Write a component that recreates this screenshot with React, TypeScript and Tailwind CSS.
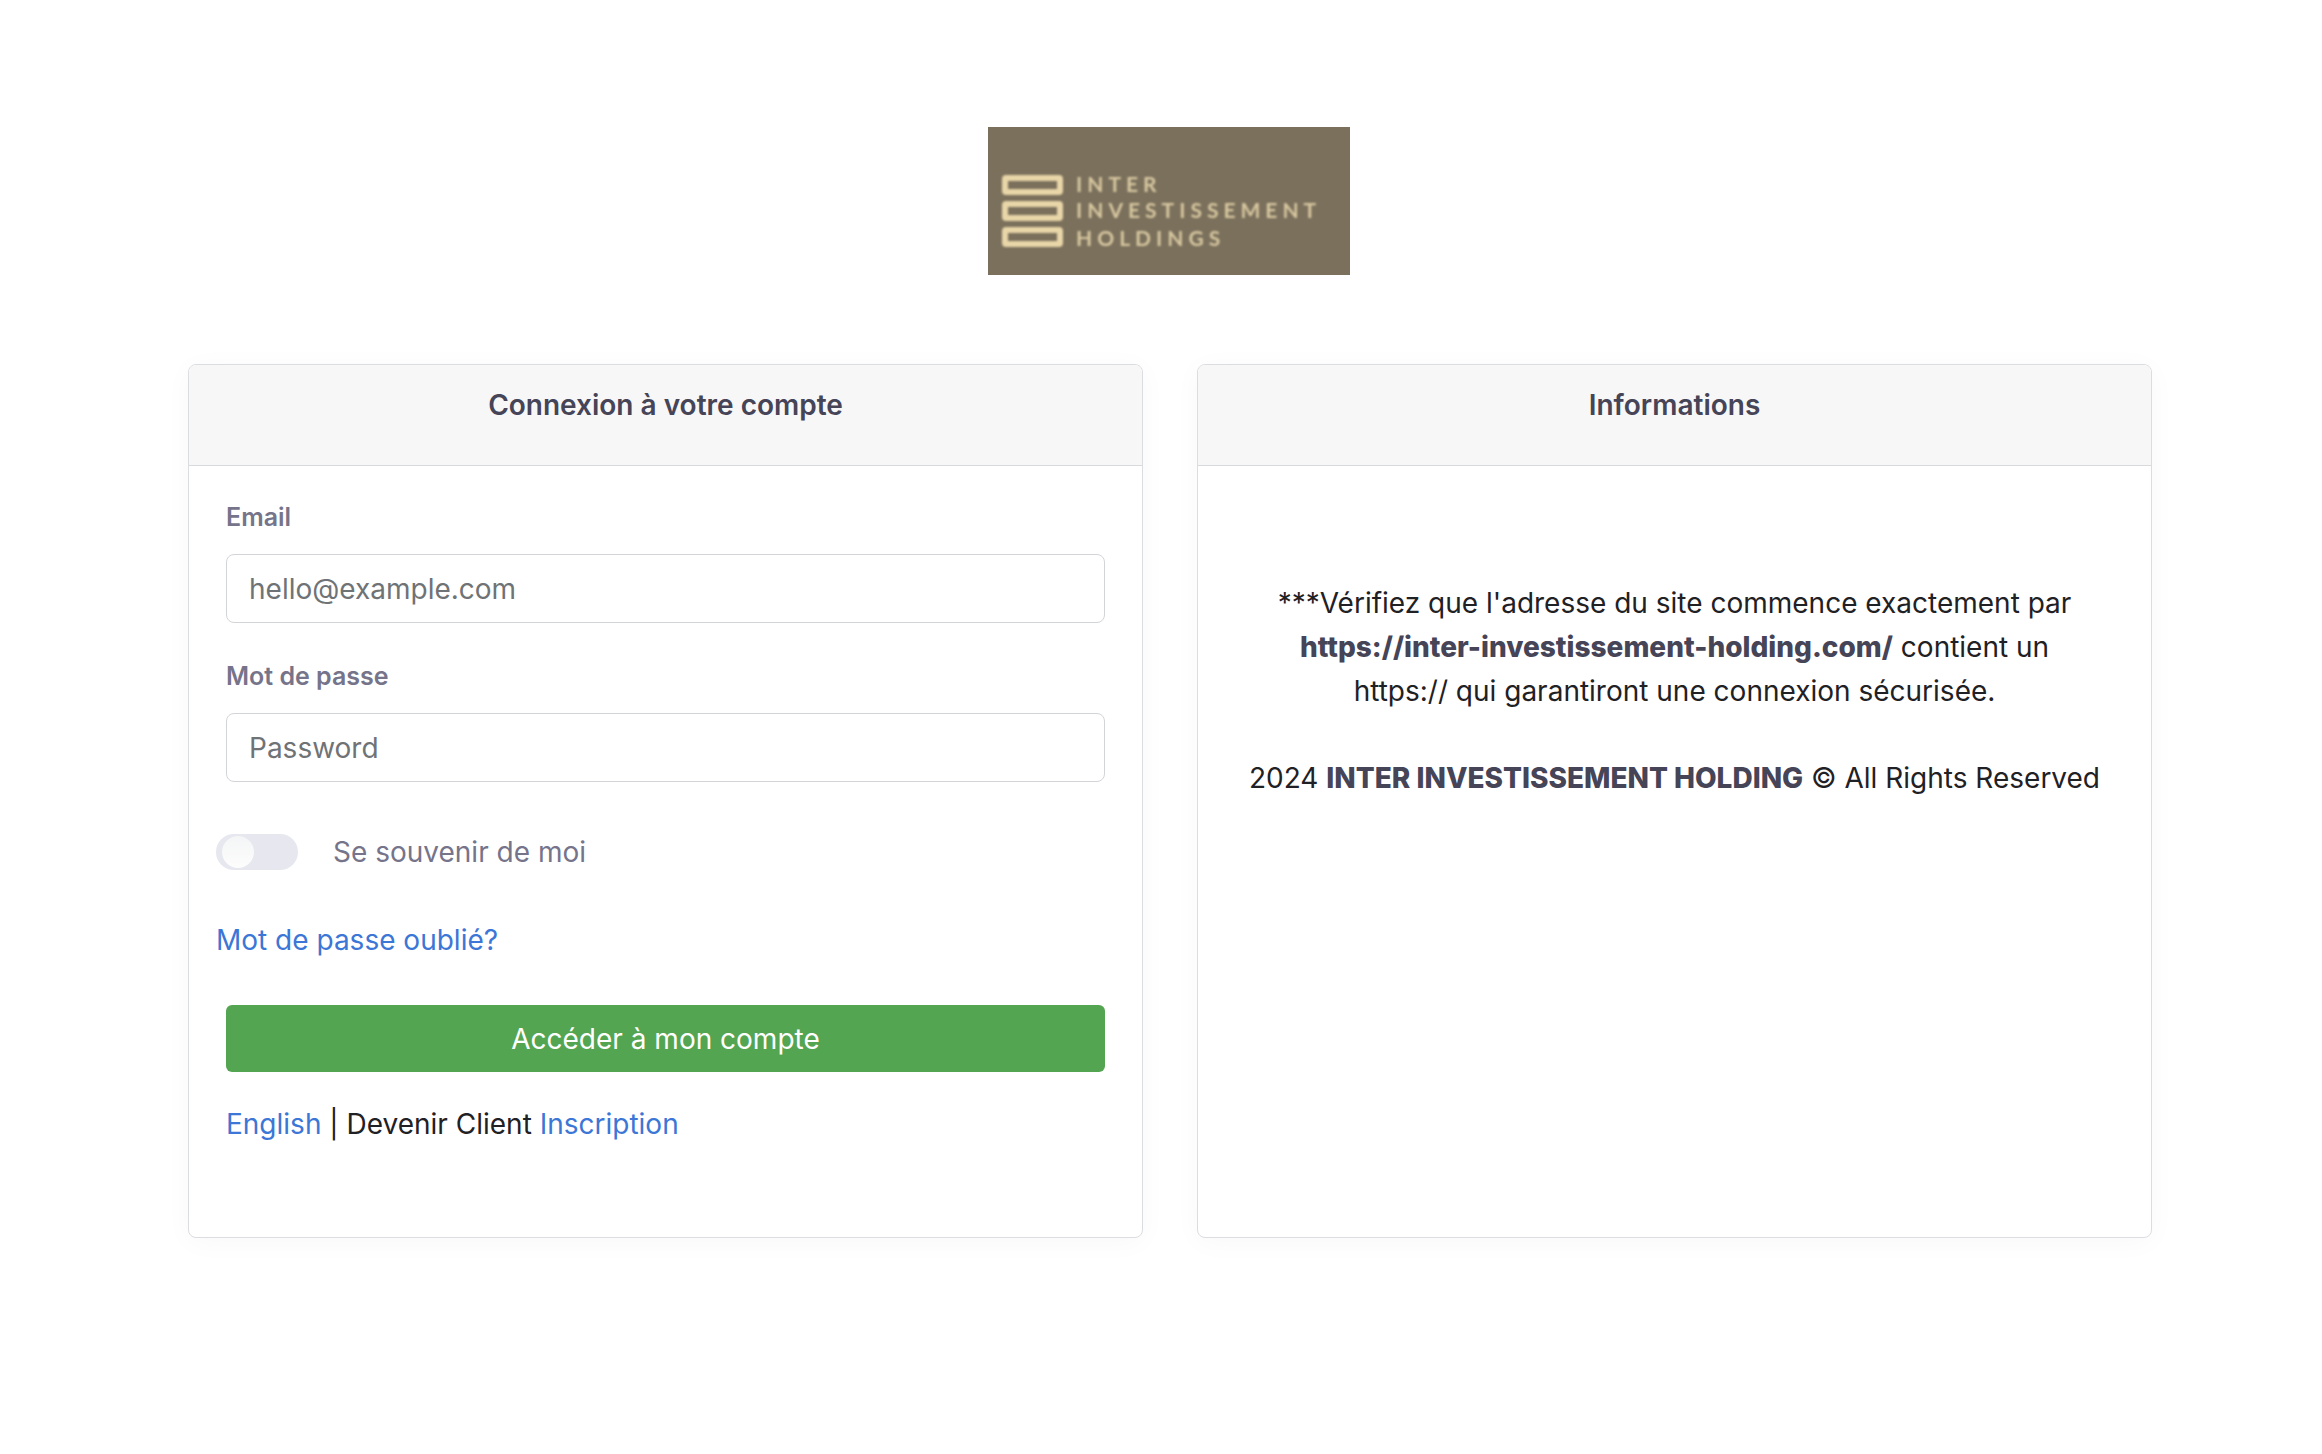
import type { ReactNode } from "react";

function Logo() {
  return (
    <svg
      className="h-[148px] w-[362px]"
      viewBox="0 0 362 148"
      role="img"
      aria-label="Inter Investissement Holdings"
    >
      <defs>
        <filter id="soften" x="-5%" y="-5%" width="110%" height="110%">
          <feGaussianBlur stdDeviation="0.9" />
        </filter>
      </defs>
      <rect width="362" height="148" fill="#7a705c" />
      <g filter="url(#soften)">
        <g fill="none" stroke="#e8d5a8" strokeWidth="6">
          <rect x="17" y="51" width="55" height="14" rx="1" />
          <rect x="17" y="77" width="55" height="14" rx="1" />
          <rect x="17" y="103" width="55" height="14" rx="1" />
        </g>
        <g fill="#d8c8a0" fontFamily="Lato, sans-serif" fontSize="21" fontWeight="700" letterSpacing="5">
          <text x="88" y="65">INTER</text>
          <text x="88" y="91">INVESTISSEMENT</text>
          <text x="88" y="119">HOLDINGS</text>
        </g>
      </g>
    </svg>
  );
}

function Card({ title, children }: { title: string; children: ReactNode }) {
  return (
    <section className="flex min-h-[874px] min-w-0 flex-1 flex-col overflow-hidden rounded-lg border border-[#dcdde1] bg-white shadow-[0_4px_28px_rgba(30,32,60,0.03)]">
      <header className="border-b border-[#d9dadc] bg-[#f7f7f7] px-9 pt-[18px] pb-[38px]">
        <h2 className="text-center text-[28px] leading-[44px] font-semibold text-[#464457]">{title}</h2>
      </header>
      {children}
    </section>
  );
}

type FieldProps = { id: string; label: string; type: string; placeholder: string };

function Field({ id, label, type, placeholder }: FieldProps) {
  return (
    <div className="flex flex-col gap-[19px]">
      <label htmlFor={id} className="text-[25px] leading-9 font-semibold text-[#76748a]">
        {label}
      </label>
      <input
        id={id}
        type={type}
        placeholder={placeholder}
        className="h-[69px] w-full rounded-lg border border-[#d3d4d8] bg-white px-[22px] text-[28px] text-[#464457] placeholder:text-[#6f7376] placeholder:opacity-100"
      />
    </div>
  );
}

export default function App() {
  return (
    <div className="min-h-screen bg-white pt-[127px] pr-[170px] pb-12 pl-[188px] font-['Inter','Liberation_Sans',sans-serif] text-[28px] leading-[44px] text-[#1f2124]">
      <div className="flex justify-center pr-[2px]">
        <Logo />
      </div>
      <main className="mt-[89px] flex gap-[54px]">
        <Card title="Connexion à votre compte">
          <form className="flex flex-col px-[37px] pt-[33px]" onSubmit={(e) => e.preventDefault()}>
            <div className="flex flex-col gap-[35px]">
              <Field id="email" label="Email" type="email" placeholder="hello@example.com" />
              <Field id="password" label="Mot de passe" type="password" placeholder="Password" />
            </div>
            <div className="-ml-[10px] mt-12 flex items-center gap-[35px]">
              <input
                id="remember"
                type="checkbox"
                className="h-9 w-[82px] appearance-none rounded-full bg-[#e6e7ef] p-0.5 before:ml-1 before:block before:size-8 before:rounded-full before:bg-linear-to-b before:from-[#f4f5f6] before:to-[#fdfdfd] before:content-[''] checked:before:ml-[42px]"
              />
              <label htmlFor="remember" className="text-[#76748a]">
                Se souvenir de moi
              </label>
            </div>
            <a href="#forgot" className="-ml-[10px] mt-11 self-start text-[#3c76d6]">
              Mot de passe oublié?
            </a>
            <button type="submit" className="mt-[43px] h-[67px] w-full rounded-md bg-[#53a551] text-white">
              Accéder à mon compte
            </button>
            <p className="mt-[30px]">
              <a href="#english" className="text-[#3c76d6]">English</a> | Devenir Client{" "}
              <a href="#signup" className="text-[#3c76d6]">Inscription</a>
            </p>
          </form>
        </Card>
        <Card title="Informations">
          <div className="px-9 pt-[115px] text-center">
            <p>
              ***Vérifiez que l'adresse du site commence exactement par
              <br />
              <strong className="font-extrabold text-[#464457]">https://inter-investissement-holding.com/</strong>{" "}
              contient un
              <br />
              https:// qui garantiront une connexion sécurisée.
            </p>
            <p className="mt-[43px]">
              2024 <strong className="font-extrabold text-[#464457]">INTER INVESTISSEMENT HOLDING</strong> © All Rights
              Reserved
            </p>
          </div>
        </Card>
      </main>
    </div>
  );
}
